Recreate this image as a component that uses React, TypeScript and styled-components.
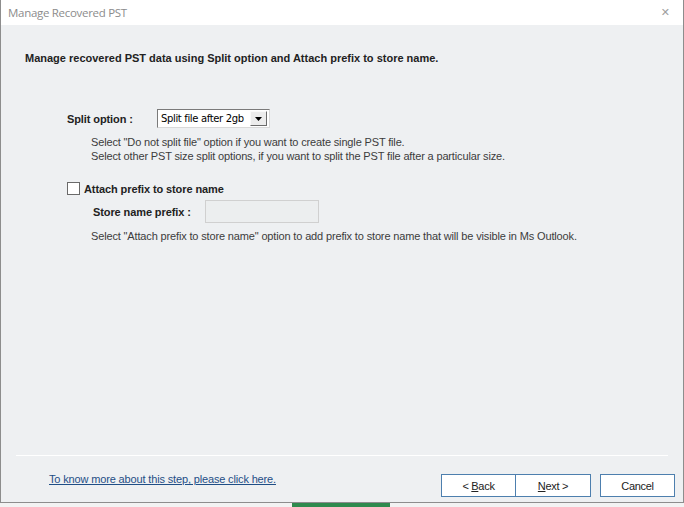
import React, { useState } from "react";
import styled, { createGlobalStyle } from "styled-components";

const GlobalStyle = createGlobalStyle`
  html, body {
    margin: 0;
    padding: 0;
    background: #f3f3f3;
    font-family: "Liberation Sans", Arial, sans-serif;
  }
`;

const Screen = styled.div`
  width: 684px;
  height: 507px;
  display: flex;
  flex-direction: column;
  align-items: center;
  overflow: hidden;
`;

const Window = styled.div`
  width: 684px;
  height: 503px;
  box-sizing: border-box;
  border: 1px solid #8d8d8d;
  border-top: none;
  background: #eef0f2;
  display: flex;
  flex-direction: column;
  flex-shrink: 0;
`;

const BehindStrip = styled.div`
  width: 98px;
  height: 4px;
  margin-left: -2px;
  background: #2f8a4e;
`;

const TitleBar = styled.div`
  height: 25px;
  background: #ffffff;
  display: flex;
  align-items: center;
  justify-content: space-between;
  padding: 0 13px 0 7px;
  flex-shrink: 0;
`;

const TitleText = styled.span`
  font-family: "Open Sans", sans-serif;
  font-size: 11.5px;
  color: #8c8c8c;
  letter-spacing: -0.3px;
`;

const CloseGlyph = styled.span`
  font-family: "DejaVu Sans", sans-serif;
  font-size: 11px;
  color: #a0a0a0;
`;

const Body = styled.div`
  flex: 1;
  display: flex;
  flex-direction: column;
  padding: 27px 0 0 24px;
`;

const Heading = styled.div`
  font-size: 11px;
  font-weight: bold;
  color: #222;
  letter-spacing: 0;
`;

const Section = styled.div`
  display: flex;
  flex-direction: column;
  padding-left: ${(p: { $indent: number }) => p.$indent}px;
`;

const Row = styled.div`
  display: flex;
  align-items: center;
  gap: ${(p: { $gap: number }) => p.$gap}px;
`;

const Label = styled.span`
  font-size: 11px;
  font-weight: bold;
  color: #222;
  letter-spacing: -0.1px;
  width: ${(p: { $width?: number }) => (p.$width ? `${p.$width}px` : "auto")};
`;

const Hint = styled.div`
  font-size: 11px;
  color: #3c3c3c;
  line-height: 14px;
  letter-spacing: -0.15px;
`;

const SelectBox = styled.div`
  width: 113px;
  height: 19px;
  box-sizing: border-box;
  border: 1px solid #7a7a7a;
  border-right-color: #d9d9d9;
  border-bottom-color: #d9d9d9;
  background: #fff;
  display: flex;
  align-items: center;
  padding: 0 2px 0 3px;
  font-family: "DejaVu Sans", sans-serif;
  font-size: 10px;
  color: #000;
  letter-spacing: -0.35px;
`;

const SelectValue = styled.span`
  flex: 1;
`;

const DropButton = styled.span`
  width: 17px;
  height: 15px;
  box-sizing: border-box;
  border: 1px solid #fafafa;
  border-right-color: #6b6b6b;
  border-bottom-color: #6b6b6b;
  background: #ececec;
  display: flex;
  align-items: center;
  justify-content: center;
`;

const Check = styled.span`
  width: 13px;
  height: 13px;
  box-sizing: border-box;
  border: 1px solid #6a6a6a;
  background: #fff;
`;

const TextInput = styled.input`
  width: 114px;
  height: 23px;
  box-sizing: border-box;
  border: 1px solid #d0d0d0;
  background: #eceeef;
  outline: none;
  padding: 0 3px;
`;

const Footer = styled.div`
  flex-shrink: 0;
  display: flex;
  flex-direction: column;
`;

const Separator = styled.div`
  height: 1px;
  margin: 0 15px;
  background: #ffffff;
`;

const FooterRow = styled.div`
  display: flex;
  align-items: flex-start;
  justify-content: space-between;
  padding: 18px 8px 5px 48px;
`;

const HelpLink = styled.a`
  font-size: 11px;
  color: #1f4e86;
  text-decoration: underline;
  letter-spacing: -0.15px;
  margin-top: -1px;
  cursor: pointer;
`;

const ButtonGroup = styled.div`
  display: flex;
  gap: 9px;
`;

const Joined = styled.div`
  display: flex;
`;

const Button = styled.button`
  width: 75px;
  height: 23px;
  box-sizing: border-box;
  border: 1px solid #4d7fae;
  background: #ffffff;
  font-family: "Liberation Sans", Arial, sans-serif;
  font-size: 11px;
  color: #222;
  letter-spacing: -0.3px;
  padding: 0;
  & + & {
    border-left: none;
  }
`;

export default function App() {
  const [prefix, setPrefix] = useState("");

  return (
    <>
      <GlobalStyle />
      <Screen>
        <Window>
          <TitleBar>
            <TitleText>Manage Recovered PST</TitleText>
            <CloseGlyph>✕</CloseGlyph>
          </TitleBar>
          <Body>
            <Heading>Manage recovered PST data using Split option and Attach prefix to store name.</Heading>

            <Section $indent={42} style={{ marginTop: 45 }}>
              <Row $gap={0}>
                <Label $width={90}>Split option :</Label>
                <SelectBox>
                  <SelectValue>Split file after 2gb</SelectValue>
                  <DropButton>
                    <svg width="7" height="4" viewBox="0 0 7 4">
                      <path d="M0 0 H7 L3.5 4 Z" fill="#000" />
                    </svg>
                  </DropButton>
                </SelectBox>
              </Row>
              <Section $indent={24} style={{ marginTop: 7 }}>
                <Hint>Select "Do not split file" option if you want to create single PST file.</Hint>
                <Hint>Select other PST size split options, if you want to split the PST file after a particular size.</Hint>
              </Section>
            </Section>

            <Section $indent={42} style={{ marginTop: 19 }}>
              <Row $gap={4}>
                <Check />
                <Label>Attach prefix to store name</Label>
              </Row>
              <Section $indent={26} style={{ marginTop: 5 }}>
                <Row $gap={0}>
                  <Label $width={112}>Store name prefix :</Label>
                  <TextInput value={prefix} onChange={(e) => setPrefix(e.target.value)} disabled />
                </Row>
              </Section>
              <Section $indent={24} style={{ marginTop: 6 }}>
                <Hint>Select "Attach prefix to store name" option to add prefix to store name that will be visible in Ms Outlook.</Hint>
              </Section>
            </Section>
          </Body>
          <Footer>
            <Separator />
            <FooterRow>
              <HelpLink>To know more about this step, please click here.</HelpLink>
              <ButtonGroup>
                <Joined>
                  <Button>&lt; <u>B</u>ack</Button>
                  <Button><u>N</u>ext &gt;</Button>
                </Joined>
                <Button>Cancel</Button>
              </ButtonGroup>
            </FooterRow>
          </Footer>
        </Window>
        <BehindStrip />
      </Screen>
    </>
  );
}
